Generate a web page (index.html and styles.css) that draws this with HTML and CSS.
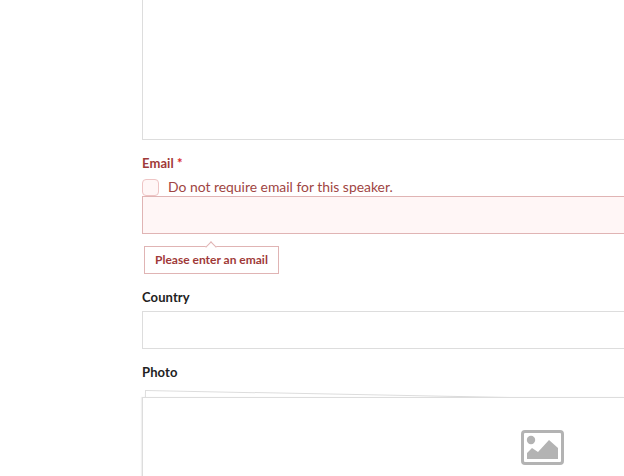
FILE: index.html
```html
<!DOCTYPE html>
<html>
<head>
  <title>Speaker form</title>
  <link rel="stylesheet" href="styles.css">
</head>
<body>
  <form class="form">
    <div class="bio-box"></div>

    <div class="field field-error">
      <label class="label">Email <span class="required">*</span></label>
      <div class="check-row">
        <span class="checkbox"></span>
        <span class="check-text">Do not require email for this speaker.</span>
      </div>
      <div class="input"></div>
      <div class="tooltip">Please enter an email</div>
    </div>

    <div class="field">
      <label class="label">Country</label>
      <div class="input"></div>
    </div>

    <div class="field">
      <label class="label">Photo</label>
      <div class="photo">
        <div class="photo-back"></div>
        <div class="photo-front">
          <svg class="photo-icon" viewBox="0 0 43 35" width="43" height="35" xmlns="http://www.w3.org/2000/svg">
            <rect x="1.5" y="1.5" width="40" height="32" rx="2.5" fill="none" stroke="#b3b3b3" stroke-width="3"/>
            <circle cx="10" cy="10" r="4.2" fill="#b3b3b3"/>
            <path d="M6 29 V23 L11 18 L17 22 L28 10 L37 18 V29 Z" fill="#b3b3b3"/>
          </svg>
        </div>
      </div>
    </div>
  </form>
</body>
</html>
```

FILE: styles.css
```css
html, body {
  margin: 0;
  padding: 0;
  height: 476px;
  overflow: hidden;
  background: #fff;
}
body {
  font-family: Lato, sans-serif;
  font-size: 14px;
  color: #222;
}
.form {
  width: 482px;
  margin-left: 142px;
}
.bio-box {
  height: 139px;
  border: 1px solid #ddd;
  border-width: 0 0 1px 1px;
}
.field {
  margin-top: 15px;
}
.label {
  display: block;
  height: 17px;
  line-height: 17px;
  margin-bottom: 6px;
  font-size: 13px;
  font-weight: 700;
  letter-spacing: 0.1px;
}
.field-error {
  color: #9f3a38;
}
.required {
  color: #db2828;
}
.check-row {
  display: flex;
  align-items: center;
  gap: 9px;
  height: 18px;
}
.check-text {
  font-size: 13.9px;
  margin-top: -2px;
  color: #a04543;
}
.checkbox {
  width: 15px;
  height: 15px;
  border: 1px solid #eec4c4;
  border-radius: 4px;
  background: #fff6f6;
}
.input {
  height: 36px;
  border: 1px solid #ddd;
  border-right: none;
}
.field-error .input {
  border-color: #e0b4b4;
  background: #fff6f6;
}
.tooltip {
  position: relative;
  display: inline-block;
  margin: 12px 0 0 2px;
  padding: 0 10px;
  height: 26px;
  line-height: 26px;
  border: 1px solid #e0b4b4;
  background: #fff;
  font-size: 12px;
  font-weight: 700;
}
.tooltip::before {
  content: "";
  position: absolute;
  left: 62px;
  top: -4px;
  width: 7px;
  height: 7px;
  background: #fff;
  border: 1px solid #e0b4b4;
  border-width: 1px 0 0 1px;
  transform: rotate(45deg);
}
.field-error + .field {
  margin-top: 15px;
}
.field-error + .field .label {
  margin-bottom: 5px;
}
.photo {
  position: relative;
  margin-top: 16px;
}
.photo-back {
  position: absolute;
  left: 3px;
  top: -7px;
  width: 400px;
  height: 60px;
  border: 1px solid #ddd;
  box-sizing: border-box;
  transform: rotate(1.1deg);
  transform-origin: 0 0;
}
.photo-front {
  position: relative;
  height: 78px;
  border: 1px solid #ddd;
  border-width: 1px 0 0 1px;
  background: #fff;
  box-shadow: -1px 0 1px rgba(0, 0, 0, 0.06);
}
.photo-icon {
  position: absolute;
  left: 378px;
  top: 32px;
}
```
